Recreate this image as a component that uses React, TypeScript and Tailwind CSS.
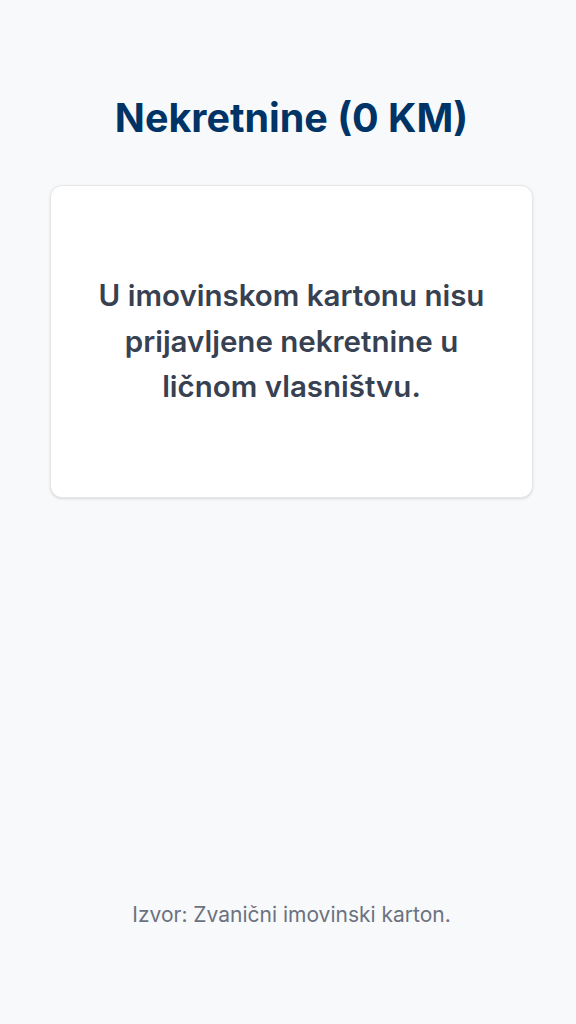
import React from "react";

export default function App() {
  return (
    <div
      className="flex h-[1024px] w-full flex-col bg-[#f8f9fa] pl-[50px] pr-[43px]"
      style={{ fontFamily: "Inter, 'Noto Sans', sans-serif" }}
    >
      <h1 className="mt-[94px] text-center text-[39.5px] font-bold leading-[48px] text-[#003366]">
        Nekretnine (0 KM)
      </h1>
      <div className="mt-[43px] flex h-[313px] items-center justify-center rounded-xl border border-gray-200 bg-white px-10 shadow-sm">
        <p className="text-center text-[29.5px] font-semibold leading-[45.5px] text-[#374151]">
          U imovinskom kartonu nisu prijavljene nekretnine u ličnom vlasništvu.
        </p>
      </div>
      <p className="mt-auto mb-[95px] text-center text-[21px] leading-[28px] text-[#6b7280]">
        Izvor: Zvanični imovinski karton.
      </p>
    </div>
  );
}
